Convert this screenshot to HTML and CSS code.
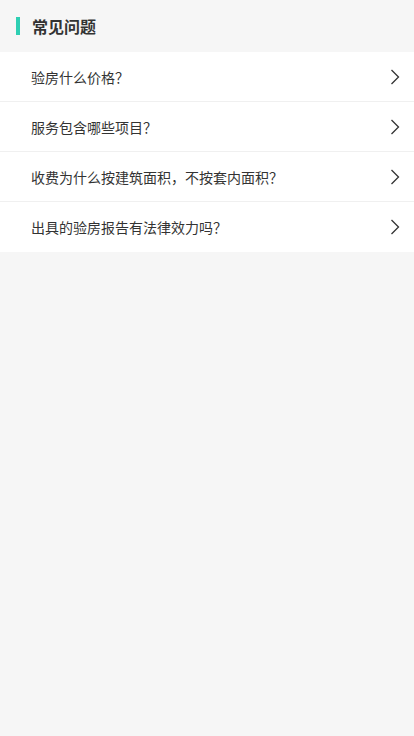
FILE: index.html
```html
<!DOCTYPE html>
<html lang="zh-CN">
<head>
<meta charset="utf-8">
<title>常见问题</title>
<link rel="stylesheet" href="styles.css">
</head>
<body>
<div class="header">
  <span class="bar"></span>
  <span class="title">常见问题</span>
</div>
<ul class="list">
  <li class="row"><span class="q">验房什么价格？</span><svg class="chev" width="10" height="16" viewBox="0 0 10 16"><path d="M1.5 1 L8.5 8 L1.5 15" fill="none" stroke="#333" stroke-width="1.3"/></svg></li>
  <li class="row"><span class="q">服务包含哪些项目？</span><svg class="chev" width="10" height="16" viewBox="0 0 10 16"><path d="M1.5 1 L8.5 8 L1.5 15" fill="none" stroke="#333" stroke-width="1.3"/></svg></li>
  <li class="row"><span class="q">收费为什么按建筑面积，不按套内面积？</span><svg class="chev" width="10" height="16" viewBox="0 0 10 16"><path d="M1.5 1 L8.5 8 L1.5 15" fill="none" stroke="#333" stroke-width="1.3"/></svg></li>
  <li class="row"><span class="q">出具的验房报告有法律效力吗？</span><svg class="chev" width="10" height="16" viewBox="0 0 10 16"><path d="M1.5 1 L8.5 8 L1.5 15" fill="none" stroke="#333" stroke-width="1.3"/></svg></li>
</ul>
</body>
</html>
```
FILE: styles.css
```css
html, body {
  margin: 0;
  padding: 0;
  background: #f6f6f6;
  font-family: "Noto Sans CJK SC", "Noto Sans", sans-serif;
}
.header {
  height: 52px;
  display: flex;
  align-items: center;
  padding-left: 16px;
  box-sizing: border-box;
}
.bar {
  width: 4px;
  height: 18px;
  background: #2ecfb3;
  margin-right: 12px;
}
.title {
  font-size: 16px;
  font-weight: bold;
  color: #333;
  line-height: 20px;
}
.list {
  list-style: none;
  margin: 0;
  padding: 0;
  background: #fff;
}
.row {
  height: 50px;
  box-sizing: border-box;
  display: flex;
  align-items: center;
  justify-content: space-between;
  padding: 0 14px 0 31px;
  border-bottom: 1px solid #f0f0f0;
}
.row:last-child {
  border-bottom: none;
}
.q {
  font-size: 14px;
  color: #333;
  line-height: 20px;
}
.chev {
  display: block;
}
```
